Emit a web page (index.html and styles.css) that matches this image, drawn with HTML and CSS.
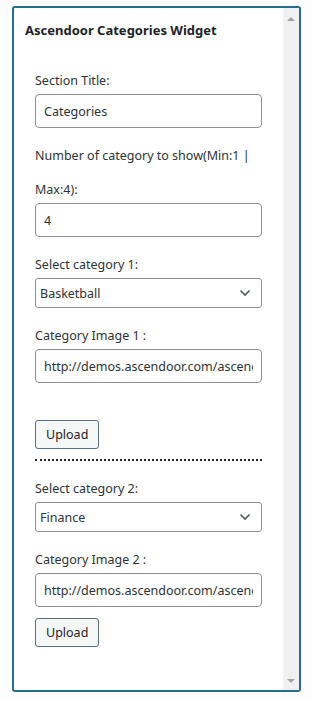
FILE: index.html
```html
<!DOCTYPE html>
<html lang="en">

<head>
    <meta charset="UTF-8">
    <meta name="viewport" content="width=device-width, initial-scale=1.0">
    <title>Ascendoor Categories Widget</title>
    <link rel="stylesheet" href="styles.css">
</head>

<body>
    <div class="widget">
        <div class="widget-body">
            <h3 class="widget-title">Ascendoor Categories Widget</h3>
            <div class="widget-form">
                <label class="field-label">Section Title:</label>
                <input class="field-input" type="text" value="Categories">

                <label class="field-label">Number of category to show(Min:1 | Max:4):</label>
                <input class="field-input" type="text" value="4">

                <label class="field-label">Select category 1:</label>
                <div class="field-select">
                    <span>Basketball</span>
                    <svg width="12" height="8" viewBox="0 0 12 8"><path d="M1.5 1.5 L6 6 L10.5 1.5" fill="none" stroke="#50575e" stroke-width="1.6"/></svg>
                </div>

                <label class="field-label">Category Image 1 :</label>
                <input class="field-input" type="text" value="http://demos.ascendoor.com/ascendoor-sports/wp-content/uploads/basketball.jpg">

                <button class="upload upload-first">Upload</button>
                <!-- separator between category blocks -->
                <div class="separator"></div>

                <label class="field-label">Select category 2:</label>
                <div class="field-select">
                    <span>Finance</span>
                    <svg width="12" height="8" viewBox="0 0 12 8"><path d="M1.5 1.5 L6 6 L10.5 1.5" fill="none" stroke="#50575e" stroke-width="1.6"/></svg>
                </div>

                <label class="field-label">Category Image 2 :</label>
                <input class="field-input" type="text" value="http://demos.ascendoor.com/ascendoor-sports/wp-content/uploads/finance.jpg">

                <button class="upload">Upload</button>
            </div>
        </div>
        <div class="scrollbar">
            <span class="arrow-up"></span>
            <span class="arrow-down"></span>
        </div>
    </div>
</body>

</html>
```

FILE: styles.css
```css
* {
    margin: 0;
    padding: 0;
    box-sizing: border-box;
}

body {
    background: #fdfdfd;
    font-family: "Noto Sans", "Open Sans", sans-serif;
    font-size: 13px;
    color: #2c3338;
}

.widget {
    display: flex;
    height: 686px;
    margin: 6px 11px 0 12px;
    background: #fff;
    border: 2px solid #226e8e;
    border-radius: 3px;
}

.widget-body {
    flex: 1;
    padding: 13px 11px 0 11px;
}

.widget-title {
    font-size: 13px;
    line-height: 18px;
    font-weight: 700;
    color: #1d2327;
}

.widget-form {
    padding: 25px 10px 0 10px;
    font-size: 12.5px;
}

.field-label {
    display: block;
    line-height: 34px;
    margin-bottom: -4px;
}

.field-input {
    display: block;
    width: 100%;
    height: 34px;
    margin-bottom: 11px;
    padding: 0 8px;
    border: 1px solid #8c8f94;
    border-radius: 4px;
    font-family: inherit;
    font-size: 12.5px;
    color: #2c3338;
    background: #fff;
}

.field-select {
    display: flex;
    align-items: center;
    justify-content: space-between;
    height: 30px;
    margin-bottom: 11px;
    padding: 0 10px 0 4px;
    border: 1px solid #8c8f94;
    border-radius: 3px;
    color: #2c3338;
}

.upload {
    display: block;
    height: 29px;
    padding: 0 10px;
    border: 1px solid #52708a;
    border-radius: 3px;
    background: #f6f7f7;
    font-family: inherit;
    font-size: 12.5px;
    color: #1d2327;
}

.upload-first {
    margin-top: 37px;
}

.separator {
    height: 2px;
    margin: 10px 0 11px 0;
    border-top: 2px dotted #1d2327;
}

.widget-form .upload:last-child {
    margin-top: 3px;
}

.scrollbar {
    position: relative;
    width: 16px;
    background: #f0f0f0;
}

.arrow-up,
.arrow-down {
    position: absolute;
    left: 4px;
    width: 0;
    height: 0;
    border-left: 4px solid transparent;
    border-right: 4px solid transparent;
}

.arrow-up {
    top: 9px;
    border-bottom: 4px solid #a3a3a3;
}

.arrow-down {
    bottom: 7px;
    border-top: 4px solid #a3a3a3;
}
```
